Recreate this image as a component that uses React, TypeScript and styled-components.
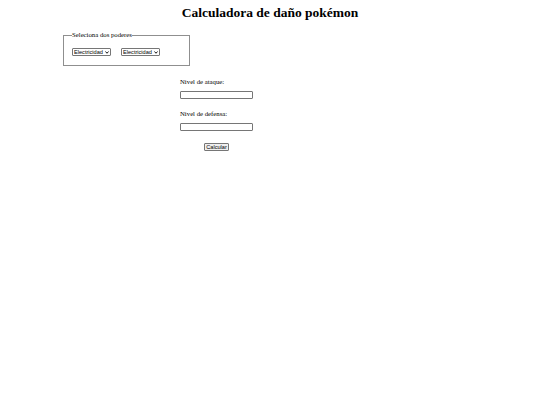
import React from "react";
import styled, { createGlobalStyle } from "styled-components";

const GlobalStyle = createGlobalStyle`
  html, body {
    margin: 0;
    padding: 0;
    background: #ffffff;
  }
  body {
    font-family: "Liberation Serif", "Times New Roman", serif;
    color: #000000;
  }
`;

const Page = styled.div`
  width: 540px;
  padding-top: 5px;
`;

const Title = styled.h1`
  margin: 0;
  font-size: 13.5px;
  line-height: 15px;
  font-weight: bold;
  text-align: center;
`;

const PowersRow = styled.div`
  padding-left: 63px;
  margin-top: 11px;
`;

const Powers = styled.fieldset`
  box-sizing: border-box;
  width: 127px;
  height: 35px;
  margin: 0;
  padding: 9px 8px 0 8px;
  border: 1px solid #8f8f8f;
  display: flex;
  gap: 10px;
  align-items: flex-start;
`;

const Legend = styled.legend`
  padding: 0;
  font-size: 6.75px;
  line-height: 8px;
`;

const SelectWrap = styled.div`
  position: relative;
  width: 39px;
  height: 8px;
`;

const Select = styled.select`
  box-sizing: border-box;
  appearance: none;
  width: 100%;
  height: 8px;
  display: block;
  padding: 0 0 0 1px;
  font-family: "Liberation Sans", Arial, sans-serif;
  font-size: 5.6px;
  line-height: 6px;
  border: 1px solid #767676;
  border-radius: 1px;
  background: #ffffff;
  color: #000000;
  outline: none;
`;

const Chevron = styled.svg`
  position: absolute;
  right: 2px;
  top: 2.5px;
  width: 4px;
  height: 3px;
  pointer-events: none;
`;

const Form = styled.form`
  margin-left: 180px;
  width: 73px;
  margin-top: 12px;
  display: flex;
  flex-direction: column;
`;

const Field = styled.div`
  display: flex;
  flex-direction: column;
  gap: 5px;
  margin-bottom: 11px;
`;

const Label = styled.label`
  font-size: 6.75px;
  line-height: 8px;
`;

const Input = styled.input`
  box-sizing: border-box;
  width: 73px;
  height: 8px;
  margin: 0;
  padding: 0;
  border: 1px solid #767676;
  border-radius: 1px;
`;

const Submit = styled.button`
  align-self: center;
  box-sizing: border-box;
  height: 8px;
  padding: 0 1px;
  font-family: "Liberation Sans", Arial, sans-serif;
  font-size: 5.6px;
  line-height: 6px;
  border: 1px solid #767676;
  border-radius: 1px;
  background: #efefef;
  color: #000000;
  margin-top: 1px;
`;

const types = ["Electricidad", "Fuego", "Agua", "Planta", "Normal"];

const PowerSelect = () => (
  <SelectWrap>
    <Select defaultValue="Electricidad">
      {types.map((t) => (
        <option key={t}>{t}</option>
      ))}
    </Select>
    <Chevron viewBox="0 0 8 6">
      <path d="M1 1 L4 4.5 L7 1" fill="none" stroke="#000" strokeWidth="1.8" />
    </Chevron>
  </SelectWrap>
);

export default function App() {
  return (
    <>
      <GlobalStyle />
      <Page>
        <Title>Calculadora de daño pokémon</Title>
        <PowersRow>
          <Powers>
            <Legend>Seleciona dos poderes</Legend>
            <PowerSelect />
            <PowerSelect />
          </Powers>
        </PowersRow>
        <Form onSubmit={(e) => e.preventDefault()}>
          <Field>
            <Label>Nivel de ataque:</Label>
            <Input type="text" />
          </Field>
          <Field>
            <Label>Nivel de defensa:</Label>
            <Input type="text" />
          </Field>
          <Submit type="submit">Calcular</Submit>
        </Form>
      </Page>
    </>
  );
}
